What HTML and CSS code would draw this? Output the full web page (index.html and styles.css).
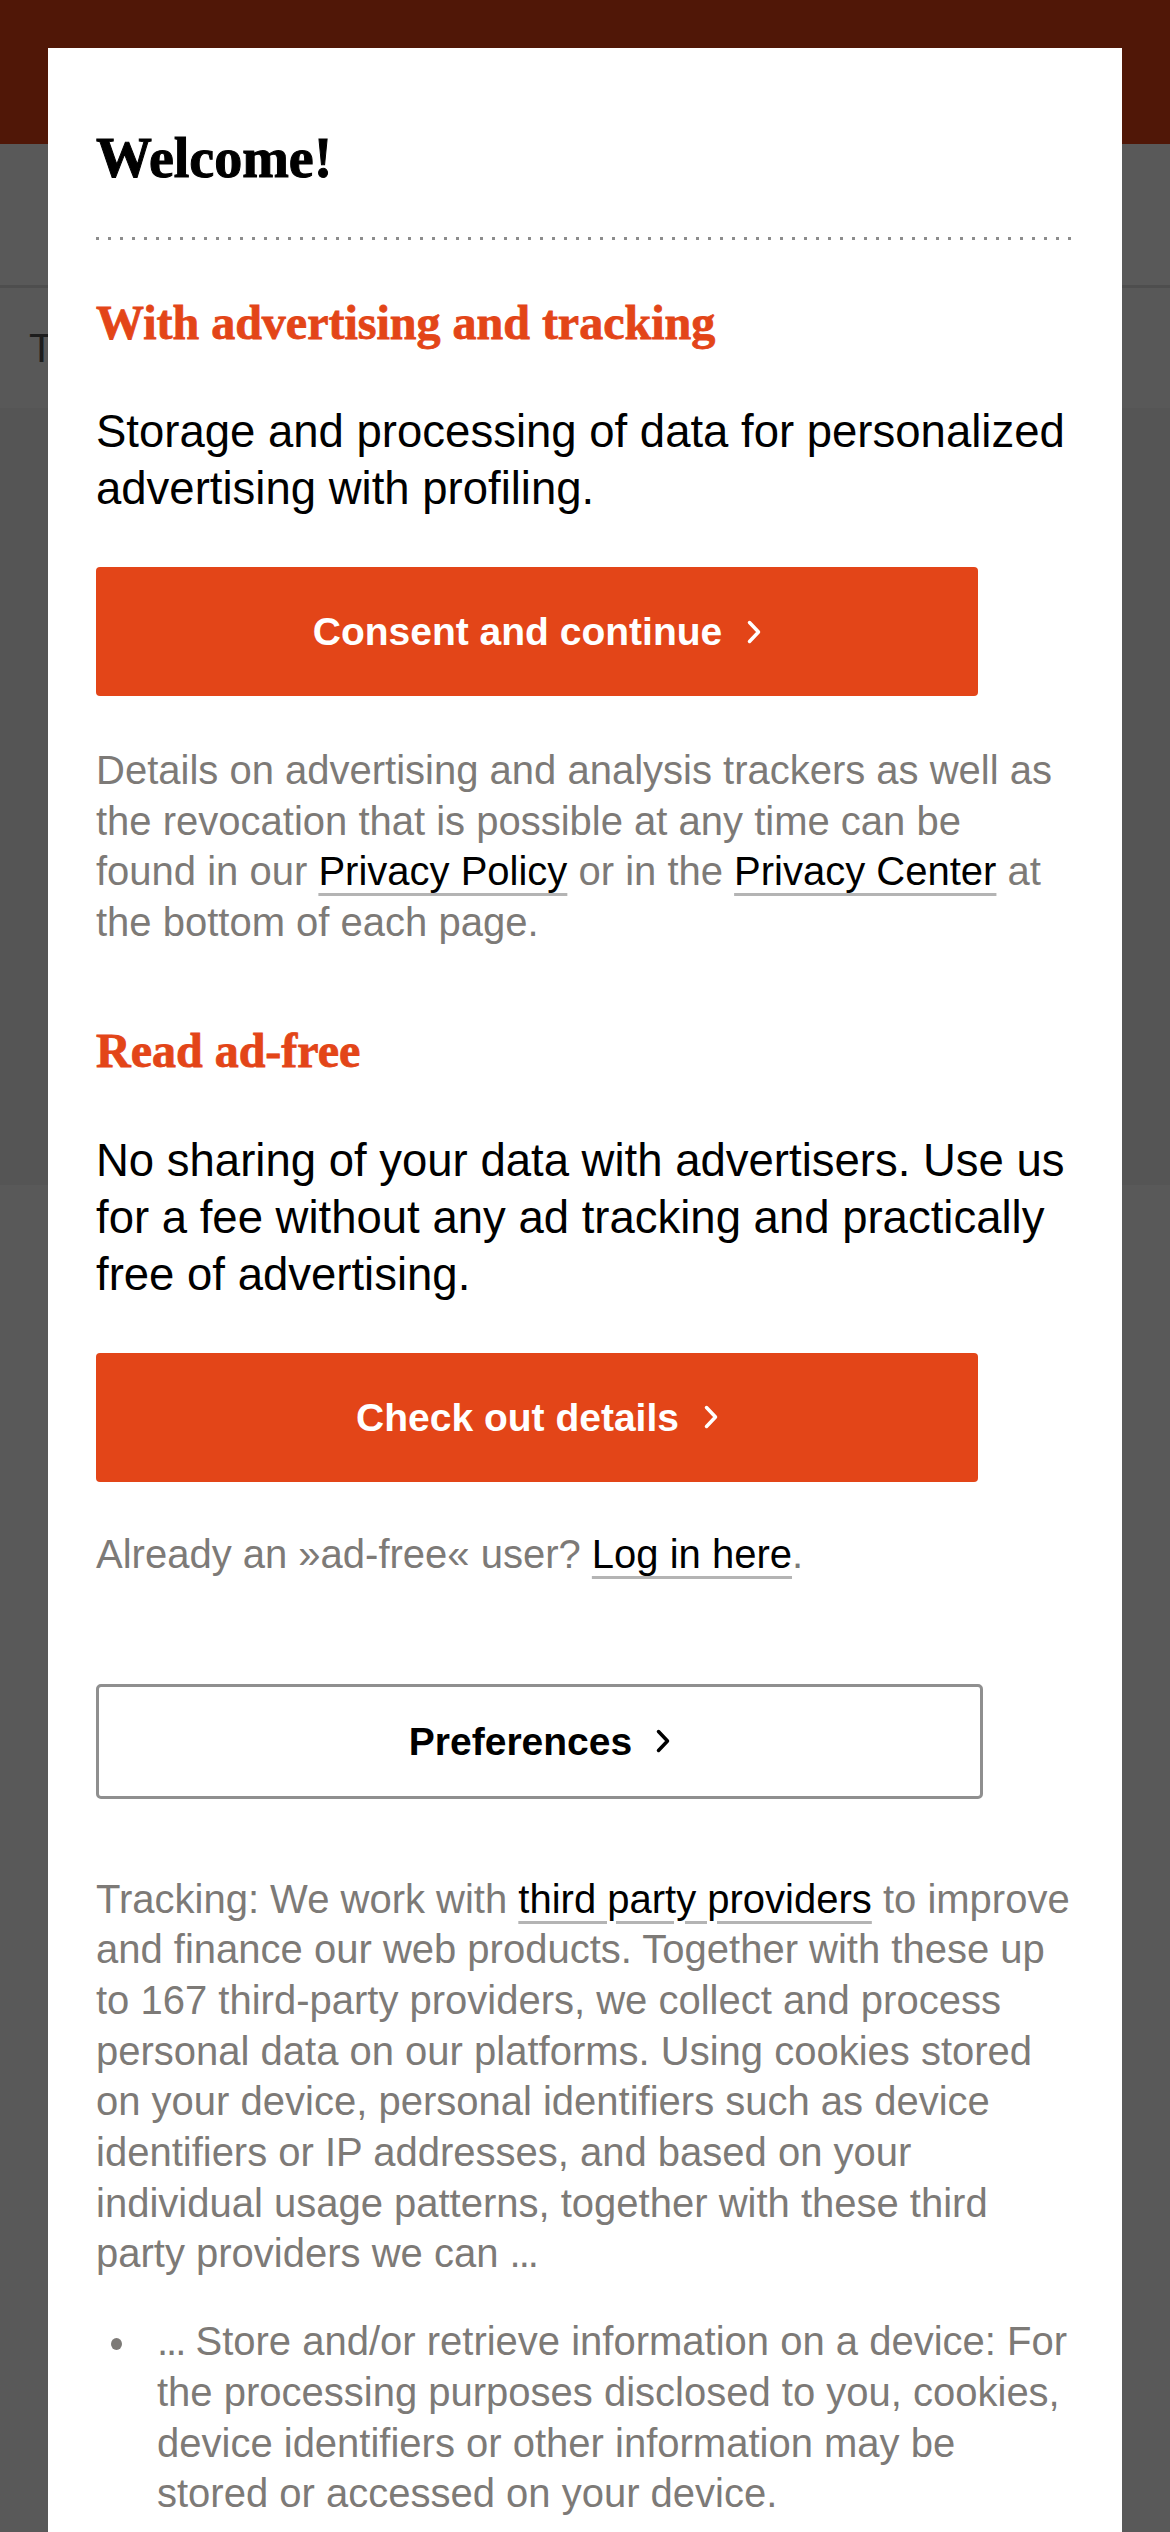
FILE: index.html
```html
<!DOCTYPE html>
<html lang="en">
<head>
<meta charset="utf-8">
<title>Welcome!</title>
<link rel="stylesheet" href="styles.css">
</head>
<body>
<div class="page">
  <header class="site-header"></header>
  <div class="site-top"></div>
  <nav class="site-nav"><span class="nav-item">Top</span></nav>
  <main class="site-main"></main>
  <div class="site-rest"></div>
</div>

<div class="overlay">
  <div class="modal">
    <h1 class="title">Welcome!</h1>
    <div class="dots"></div>

    <h2 class="section-title first">With advertising and tracking</h2>
    <p class="lead lead-1">Storage and processing of data for personalized advertising with profiling.</p>
    <a class="btn btn-primary btn-1" href="#"><span>Consent and continue</span><svg class="chev" viewBox="0 0 14 24" width="14" height="24"><polyline points="2.5,2.5 11.5,12 2.5,21.5"/></svg></a>
    <p class="note note-1">Details on advertising and analysis trackers as well as the revocation that is possible at any time can be<br>found in our <a class="link" href="#">Privacy Policy</a> or in the <a class="link" href="#">Privacy Center</a> at the bottom of each page.</p>

    <h2 class="section-title second">Read ad-free</h2>
    <p class="lead lead-2">No sharing of your data with advertisers. Use us for a fee without any ad tracking and practically free of advertising.</p>
    <a class="btn btn-primary btn-2" href="#"><span>Check out details</span><svg class="chev" viewBox="0 0 14 24" width="14" height="24"><polyline points="2.5,2.5 11.5,12 2.5,21.5"/></svg></a>
    <p class="note note-2">Already an »ad-free« user? <a class="link" href="#">Log in here</a>.</p>

    <a class="btn btn-outline" href="#"><span>Preferences</span><svg class="chev" viewBox="0 0 14 24" width="14" height="24"><polyline points="2.5,2.5 11.5,12 2.5,21.5"/></svg></a>

    <p class="note note-3">Tracking: We work with <a class="link" href="#">third party providers</a> to improve and finance our web products. Together with these up to 167 third-party providers, we collect and process personal data on our platforms. Using cookies stored on your device, personal identifiers such as device identifiers or IP addresses, and based on your individual usage patterns, together with these third party providers we can <span class="dots-text">...</span></p>

    <ul class="purposes">
      <li><span class="purpose-text"><span class="dots-text">...</span> Store and/or retrieve information on a device: For the processing purposes disclosed to you, cookies, device identifiers or other information may be stored or accessed on your device.</span></li>
    </ul>
  </div>
</div>
</body>
</html>
```

FILE: styles.css
```css
* { box-sizing: border-box; }

html, body {
  margin: 0;
  padding: 0;
}

body {
  background: #ffffff;
  font-family: "Liberation Sans", Arial, sans-serif;
  overflow: hidden;
  height: 2532px;
}

/* underlying page (dimmed by overlay) */
.page {
  display: flex;
  flex-direction: column;
  height: 2532px;
}

.site-header {
  height: 144px;
  background: #e64415;
}

.site-top {
  height: 144px;
  background: #ffffff;
  border-bottom: 3px solid #e0e0e0;
}

.site-nav {
  height: 122px;
  background: #fdfdfd;
  border-bottom: 2px solid #f4f4f4;
  display: flex;
  align-items: center;
  padding-left: 29px;
}

.nav-item {
  font-size: 41px;
  color: #555555;
}

.site-main {
  height: 775px;
  background: #f2f2f2;
}

.site-rest {
  flex: 1;
  background: #ffffff;
}

/* overlay */
.overlay {
  position: fixed;
  inset: 0;
  background: rgba(0, 0, 0, 0.65);
  padding: 48px 48px 0 48px;
}

.modal {
  height: 100%;
  background: #ffffff;
  overflow: hidden;
  padding: 80px 46px 0 48px;
  color: #000000;
}

.title {
  margin: 0;
  font-family: "Liberation Serif", "Times New Roman", serif;
  font-weight: 700;
  font-size: 56px;
  line-height: 60px;
  color: #000000;
  -webkit-text-stroke: 1px #000000;
}

.dots {
  margin-top: 49px;
  height: 3px;
  background-image: linear-gradient(to right, #8c8c8c 0, #8c8c8c 3px, transparent 3px, transparent 12px);
  background-size: 12px 3px;
  background-repeat: repeat-x;
}

.section-title {
  margin: 0;
  font-family: "Liberation Serif", "Times New Roman", serif;
  font-weight: 700;
  font-size: 48px;
  line-height: 56px;
  color: #e34518;
  -webkit-text-stroke: 0.8px #e34518;
}

.section-title.first { margin-top: 55px; }
.section-title.second { margin-top: 75px; }

.lead {
  margin: 53px 0 0 0;
  font-size: 45.5px;
  line-height: 57px;
  color: #000000;
}

.lead-1 { margin-top: 52px; }

.btn {
  display: flex;
  align-items: center;
  justify-content: center;
  gap: 25px;
  text-decoration: none;
  font-weight: 700;
  font-size: 39px;
  line-height: 39px;
  border-radius: 4px;
}

.btn-primary {
  width: 882px;
  height: 129px;
  margin-top: 50px;
  background: #e34518;
  color: #ffffff;
}

.btn-outline {
  width: 887px;
  height: 115px;
  margin-top: 104px;
  border: 3px solid #8f8f8f;
  border-radius: 5px;
  background: #ffffff;
  color: #000000;
  gap: 24px;
}

.chev {
  display: block;
  flex: none;
}

.chev polyline {
  fill: none;
  stroke: currentColor;
  stroke-width: 3.5;
  stroke-linecap: round;
  stroke-linejoin: round;
}

.note {
  margin: 49px 0 0 0;
  font-size: 40px;
  line-height: 50.7px;
  color: #7d7a77;
}

.note-2 { margin-top: 47px; }
.note-3 { margin-top: 75px; }

.link {
  color: #000000;
  text-decoration-line: underline;
  text-decoration-color: #b4b4b4;
  text-decoration-thickness: 3px;
  text-underline-offset: 8px;
}

.dots-text {
  letter-spacing: -2px;
}

.purposes {
  list-style: none;
  margin: 37px 0 0 0;
  padding: 0;
}

.purposes li {
  display: grid;
  grid-template-columns: 61px 1fr;
  align-items: start;
  font-size: 40px;
  line-height: 50.7px;
  color: #7d7a77;
}

.purposes li::before {
  content: "";
  width: 11px;
  height: 12px;
  border-radius: 50%;
  background: #7d7a77;
  margin-left: 15px;
  margin-top: 22px;
}

.purpose-text {
  display: block;
}
```
